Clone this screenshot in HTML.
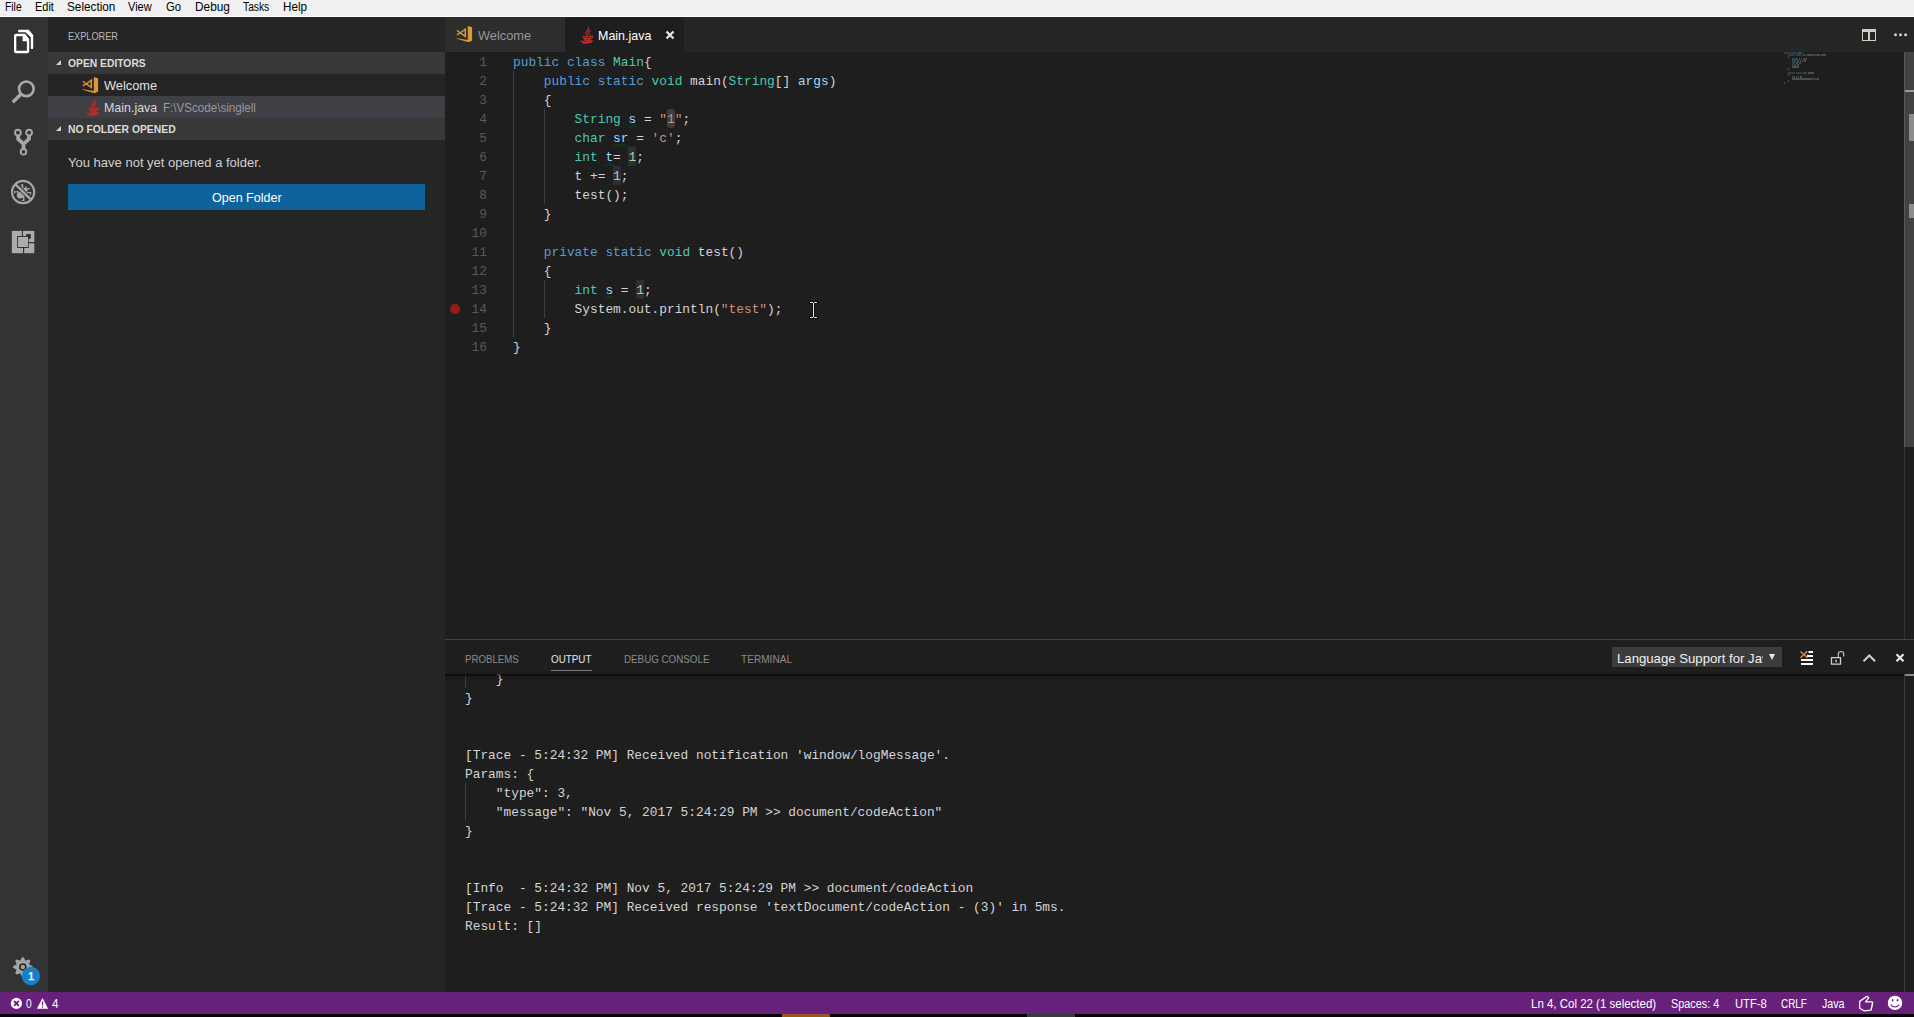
<!DOCTYPE html>
<html lang="en">
<head>
<meta charset="utf-8">
<title>Main.java - Visual Studio Code</title>
<style>
*{box-sizing:border-box;margin:0;padding:0}
html,body{width:1914px;height:1017px;overflow:hidden;background:#000}
body{position:relative;font-family:"Liberation Sans",sans-serif;font-size:13px;color:#ccc;-webkit-font-smoothing:antialiased}
.abs{position:absolute}
.t{position:absolute;white-space:pre;line-height:1;transform-origin:0 0}
/* menu */
#menu{left:0;top:0;width:1914px;height:17px;background:#f0f0f0;border-bottom:1px solid #fff}
#menu .t{top:1px;font-size:12px;color:#000;line-height:13px}
/* activity bar */
#act{left:0;top:17px;width:48px;height:975px;background:#333333}
/* sidebar */
#side{left:48px;top:17px;width:397px;height:975px;background:#252526}
.hdr{left:0;width:397px;height:22px;background:#383838}
.hdr .t{left:20px;top:5px;font-size:11px;font-weight:bold;color:#dcdcdc;line-height:12px}
.tri{position:absolute;left:7.600px;top:7.700px;width:0;height:0;border-left:5.700px solid transparent;border-bottom:5.700px solid #d0d0d0}
/* editor */
#tabs{left:445px;top:17px;width:1469px;height:35px;background:#252526}
#ed{left:445px;top:52px;width:1469px;height:587px;background:#1e1e1e}
.ln{position:absolute;left:0;margin-top:1px;width:42px;text-align:right;font-family:"Liberation Mono",monospace;font-size:12.83px;line-height:19px;height:19px;color:#5a5a5a;white-space:pre}
.cl{position:absolute;left:68px;margin-top:1px;font-family:"Liberation Mono",monospace;font-size:12.83px;line-height:19px;height:19px;color:#d4d4d4;white-space:pre}
.k{color:#569cd6}.ty{color:#4ec9b0}.v{color:#9cdcfe}.s{color:#ce9178}.n{color:#b5cea8}
.hl{position:absolute;height:19px;background:#2c3034}
.sel{position:absolute;height:19px;background:#3a3d41;border-radius:3px}
.g{position:absolute;width:1px;background:#404040}
/* panel */
#panel{left:445px;top:639px;width:1469px;height:353px;background:#1e1e1e}
#panel:before{content:"";position:absolute;left:0;top:0;width:1469px;height:1px;background:#414141}
.pt{position:absolute;transform-origin:0 0;top:14px;font-size:11px;line-height:12px;color:#8b8b8b;white-space:pre}
.ol{position:absolute;left:20px;margin-top:1px;font-family:"Liberation Mono",monospace;font-size:12.83px;line-height:19px;height:19px;color:#d4d4d4;white-space:pre}
/* status */
#status{left:0;top:992px;width:1914px;height:22px;background:#68217a}
#status .t{top:6px;font-size:12px;color:#fff;line-height:13px}
#strip{left:0;top:1014px;width:1914px;height:3px;background:#020208}
</style>
</head>
<body>
<svg width="0" height="0" style="position:absolute">
<defs>
<g id="vsc">
<path d="M11.800 .9L16.100 2.200V15.600L13.300 16.900L11.800 16.400z" fill="#dc9634"/>
<path d="M9.300 4.200V11.400L4.200 7.900z" fill="none" stroke="#dc9634" stroke-width="1.500" stroke-linejoin="miter"/>
<path d="M.9 5.300L4.600 8.200M.9 9.900L4.600 7.500" fill="none" stroke="#dc9634" stroke-width="1.400"/>
<path d="M.6 13.200L12 15.100L13.400 16.900L10.800 16.700L.6 13.700z" fill="#dc9634"/>
</g>
<g id="jv" fill="none" stroke="#b8302a" stroke-width="1.300" stroke-linecap="round">
<path d="M8.600 .6c1.200 2-3.400 3.400-2.600 5.800c.3 .9 1 1.400 1.300 2.200M10 3.600c-2.200 .9-1.700 2.300-.9 3.300" />
<path d="M3 9.300c2.500 .8 5.800 .6 7.800-.3M10.800 9.200c2-.6 2.400 1.600 0 2.300M3.800 11.200c1.500 .8 5 .7 6.400 0M4.200 12.800c1.400 .6 4 .6 5.600 0"/>
<path d="M1 14c2.500 1.500 8 1.500 11.200-.4M2.500 15.600c3 .7 6.500 .5 9-.6"/>
</g>
</defs>
</svg>
<div id="menu" class="abs">
<span class="t" style="left:4.5px;transform:scaleX(0.860)">File</span>
<span class="t" style="left:34.6px;transform:scaleX(0.914)">Edit</span>
<span class="t" style="left:67.4px;transform:scaleX(0.980)">Selection</span>
<span class="t" style="left:128.4px;transform:scaleX(0.919)">View</span>
<span class="t" style="left:166.0px;transform:scaleX(0.938)">Go</span>
<span class="t" style="left:194.5px;transform:scaleX(0.986)">Debug</span>
<span class="t" style="left:242.5px;transform:scaleX(0.855)">Tasks</span>
<span class="t" style="left:282.6px;transform:scaleX(0.972)">Help</span>
</div>

<div id="act" class="abs">
<svg class="abs" style="left:0;top:0" width="48" height="975" viewBox="0 17 48 975">
<!-- explorer -->
<path fill="#fff" fill-rule="evenodd" d="M16 33.700H25.100L29.200 38.900V51.200a2 2 0 0 1-2 2H16a2 2 0 0 1-2-2V35.700a2 2 0 0 1 2-2zM16.300 36.200H22.600V41.300H26.900V50.700H16.300z"/>
<path fill="#fff" d="M19.200 29.800H28.700L33.200 35.100V47.900a1.200 1.200 0 0 1-2.400 0V37.200L25.500 32.200H19.200a1.200 1.200 0 0 1 0-2.400z"/>
<!-- search -->
<g fill="none" stroke="#a5a8a6" stroke-linecap="butt">
<circle cx="26.350" cy="88.800" r="7.300" stroke-width="2.650"/>
<path d="M21.100 94.100L12.700 102.200" stroke-width="3.500"/>
</g>
<!-- git -->
<g fill="none" stroke="#a5a8a6">
<path d="M18.100 135.500V138.900L23.500 144V149M29 135.500V138.900L23.500 144" stroke-width="3.700" stroke-linejoin="miter"/>
<circle cx="17.900" cy="132.600" r="2.900" stroke-width="1.900" fill="#333"/>
<circle cx="29.100" cy="132.600" r="2.900" stroke-width="1.900" fill="#333"/>
<circle cx="23.500" cy="151.800" r="2.800" stroke-width="1.900" fill="#333"/>
</g>
<!-- debug -->
<g fill="#a5a8a6" stroke="none">
<circle cx="20.100" cy="195.200" r="3.300"/><circle cx="25.600" cy="189.800" r="2.300"/><path d="M18 193l5-4.500l4.500 4.500l-5 4.500z"/>
<rect x="21.600" y="184.300" width="1.700" height="4.500"/><rect x="20.600" y="184.300" width="1.500" height="1"/>
<rect x="14.100" y="191.200" width="4.500" height="1.200"/><rect x="14.100" y="191.200" width="1.100" height="2.200"/>
<rect x="26.800" y="188.100" width="3.400" height="1.100"/>
<rect x="27" y="192" width="4.100" height="1.200"/><rect x="30" y="192" width="1.100" height="2.800"/>
<rect x="23" y="196" width="1.500" height="5"/><rect x="21.800" y="200" width="1.500" height="1"/>
<path d="M25.500 186.200l1.200.5l-1 2.500l-1.200-.5z"/>
</g>
<path d="M15.400 184.300L30.800 199.500" stroke="#333" stroke-width="4.200" fill="none"/>
<g fill="none" stroke="#a5a8a6">
<circle cx="23.100" cy="192.050" r="11.150" stroke-width="2.100"/>
<path d="M15.200 184.100L31 199.700" stroke-width="2.400"/>
</g>
<!-- extensions -->
<g fill="#aaadab">
<rect x="11.840" y="230.900" width="10.060" height="22.300"/>
<rect x="21.800" y="247.400" width="1.200" height="5.800"/>
<rect x="23" y="230.900" width="11.300" height="11.150"/>
<rect x="24.200" y="243.300" width="10.100" height="9.900"/>
</g>
<rect x="26.200" y="234.100" width="4.600" height="4.600" fill="#2a2a2a"/>
<rect x="17.150" y="236" width="11.650" height="11.900" fill="#2a2a2a"/>
<rect x="18" y="236.900" width="10.100" height="10.100" fill="#aaadab"/>
<!-- gear -->
<g transform="translate(22.800 967)">
<g fill="#a3a5a3">
<circle r="7"/>
<path id="th" d="M-2.500 -6.300L-1.100 -9.500Q0 -10.100 1.100 -9.500L2.500 -6.300z"/>
<use href="#th" transform="rotate(45)"/><use href="#th" transform="rotate(90)"/><use href="#th" transform="rotate(135)"/><use href="#th" transform="rotate(180)"/><use href="#th" transform="rotate(225)"/><use href="#th" transform="rotate(270)"/><use href="#th" transform="rotate(315)"/>
</g>
<circle r="3" fill="#a3a5a3" stroke="#262626" stroke-width="1.600"/>
</g>
<circle cx="30.950" cy="976" r="9.200" fill="#167fc9"/>
<text x="31" y="980.100" text-anchor="middle" style="font-family:'Liberation Sans',sans-serif;font-size:11.200px;text-rendering:geometricPrecision" fill="#fff" stroke="#fff" stroke-width=".35">1</text>
</svg>
</div>

<div id="side" class="abs">
<span class="t" style="left:20.2px;top:14px;font-size:11px;color:#bbb;transform:scaleX(0.832)">EXPLORER</span>
<div class="abs hdr" style="top:35px"><i class="tri"></i><span class="t" style="left:20.0px;transform:scaleX(0.937)">OPEN EDITORS</span></div>
<div class="abs" style="left:0;top:57px;width:397px;height:22px"><svg class="abs" style="left:34px;top:2px" width="17" height="18"><use href="#vsc"/></svg><span class="t" style="left:55.7px;top:5px;font-size:13px;color:#e0e0e0;transform:scaleX(0.983)">Welcome</span></div>
<div class="abs" style="left:0;top:79px;width:397px;height:22px;background:#3f3f46"><svg class="abs" style="left:38px;top:3px" width="14" height="17"><use href="#jv" style="stroke:#c4443c"/></svg><span class="t" style="left:55.7px;top:5px;font-size:13px;color:#d8d8d8;transform:scaleX(0.957)">Main.java</span><span class="t" style="left:115.4px;top:6px;font-size:12px;color:#9a9a9a;transform:scaleX(0.967)">F:\VScode\singlell</span></div>
<div class="abs hdr" style="top:101px"><i class="tri"></i><span class="t" style="left:20.0px;transform:scaleX(0.942)">NO FOLDER OPENED</span></div>
<span class="t" style="left:20.0px;top:139px;font-size:13px;color:#d0d0d0;transform:scaleX(1.001)">You have not yet opened a folder.</span>
<div class="abs" style="left:20px;top:167px;width:357px;height:26px;background:#0e639c"><span class="t" style="left:143.6px;top:7px;font-size:13px;color:#fff;transform:scaleX(0.963)">Open Folder</span></div>
</div>

<div id="tabs" class="abs">
<div class="abs" style="left:0;top:0;width:120px;height:35px;background:#2d2d2d"><svg class="abs" style="left:11px;top:8px" width="17" height="18"><use href="#vsc"/></svg><span class="t" style="left:33.3px;top:12px;font-size:13px;color:#969696;transform:scaleX(0.983)">Welcome</span></div>
<div class="abs" style="left:120px;top:0;width:119px;height:35px;background:#1e1e1e"><svg class="abs" style="left:15px;top:10px" width="14" height="17"><use href="#jv"/></svg><span class="t" style="left:33.4px;top:12px;font-size:13px;color:#fff;transform:scaleX(0.959)">Main.java</span>
<svg class="abs" style="left:100px;top:13px" width="10" height="10"><path d="M1.500 1.500l7 7M8.500 1.500l-7 7" stroke="#e8e8e8" stroke-width="2.200" fill="none"/></svg></div>
<svg class="abs" style="left:1416px;top:11px" width="16" height="14" shape-rendering="crispEdges"><g fill="#c6d3c2"><rect x="1" y="1" width="14" height="3"/><rect x="1" y="1" width="1" height="12"/><rect x="14" y="1" width="1" height="12"/><rect x="1" y="12" width="14" height="1"/><rect x="7" y="1" width="2" height="12"/></g></svg>
<svg class="abs" style="left:1448px;top:15px" width="16" height="6"><circle cx="2.500" cy="2.700" r="1.500" fill="#d0d0d0"/><circle cx="7.500" cy="2.700" r="1.500" fill="#d0d0d0"/><circle cx="12.600" cy="2.700" r="1.500" fill="#d0d0d0"/></svg>
</div>

<div id="ed" class="abs">
<!--EDS-->
<i class="sel" style="left:222px;top:57px;width:8px"></i>
<i class="hl" style="left:183px;top:95px;width:8px"></i>
<i class="hl" style="left:168px;top:114px;width:8px"></i>
<i class="hl" style="left:191px;top:228px;width:8px"></i>
<div class="ln" style="top:0px">1</div><div class="cl" style="top:0px"><span class="k">public</span> <span class="k">class</span> <span class="ty">Main</span>{</div>
<div class="ln" style="top:19px">2</div><div class="cl" style="top:19px">    <span class="k">public</span> <span class="k">static</span> <span class="ty">void</span> main(<span class="ty">String</span>[] <span class="v">args</span>)</div>
<div class="ln" style="top:38px">3</div><div class="cl" style="top:38px">    {</div>
<div class="ln" style="top:57px">4</div><div class="cl" style="top:57px">        <span class="ty">String</span> <span class="v">s</span> = <span class="s">"1"</span>;</div>
<div class="ln" style="top:76px">5</div><div class="cl" style="top:76px">        <span class="ty">char</span> <span class="v">sr</span> = <span class="s">'c'</span>;</div>
<div class="ln" style="top:95px">6</div><div class="cl" style="top:95px">        <span class="ty">int</span> <span class="v">t</span>= <span class="n">1</span>;</div>
<div class="ln" style="top:114px">7</div><div class="cl" style="top:114px">        t += <span class="n">1</span>;</div>
<div class="ln" style="top:133px">8</div><div class="cl" style="top:133px">        test();</div>
<div class="ln" style="top:152px">9</div><div class="cl" style="top:152px">    }</div>
<div class="ln" style="top:171px">10</div><div class="cl" style="top:171px"></div>
<div class="ln" style="top:190px">11</div><div class="cl" style="top:190px">    <span class="k">private</span> <span class="k">static</span> <span class="ty">void</span> test()</div>
<div class="ln" style="top:209px">12</div><div class="cl" style="top:209px">    {</div>
<div class="ln" style="top:228px">13</div><div class="cl" style="top:228px">        <span class="ty">int</span> <span class="v">s</span> = <span class="n">1</span>;</div>
<div class="ln" style="top:247px">14</div><div class="cl" style="top:247px">        System.out.println(<span class="s">"test"</span>);</div>
<div class="ln" style="top:266px">15</div><div class="cl" style="top:266px">    }</div>
<div class="ln" style="top:285px">16</div><div class="cl" style="top:285px">}</div>
<svg class="abs" style="left:183.5px;top:72px;overflow:visible" width="7.7" height="5"><path d="M0 3.5 L5 1.5 L8 3.5" fill="none" stroke="#0d4411" stroke-width="1.300" stroke-linejoin="round"/></svg>
<svg class="abs" style="left:168.1px;top:91px;overflow:visible" width="15.4" height="5"><path d="M0 3.5 L5 1.5 L8 3.5 L11 1.5 L14 3.5" fill="none" stroke="#0d4411" stroke-width="1.300" stroke-linejoin="round"/></svg>
<svg class="abs" style="left:160.4px;top:110px;overflow:visible" width="7.7" height="5"><path d="M0 3.5 L5 1.5 L8 3.5" fill="none" stroke="#0d4411" stroke-width="1.300" stroke-linejoin="round"/></svg>
<svg class="abs" style="left:160.4px;top:243px;overflow:visible" width="7.7" height="5"><path d="M0 3.5 L5 1.5 L8 3.5" fill="none" stroke="#0d4411" stroke-width="1.300" stroke-linejoin="round"/></svg>
<i class="g" style="left:68px;top:19px;height:266px"></i>
<i class="g" style="left:99px;top:57px;height:95px"></i>
<i class="g" style="left:99px;top:228px;height:38px"></i>
<i class="abs" style="left:5px;top:252px;width:10px;height:10px;border-radius:50%;background:#931e18"></i>
<svg class="abs" style="left:363px;top:248px" width="11" height="20" shape-rendering="crispEdges"><g fill="#0c0c0c"><rect x="1" y="1" width="9" height="3"/><rect x="4" y="2" width="3" height="16"/><rect x="1" y="16" width="9" height="3"/></g><g fill="#ebe7e1"><rect x="2" y="2" width="3" height="1"/><rect x="6" y="2" width="3" height="1"/><rect x="5" y="3" width="1" height="14"/><rect x="2" y="17" width="3" height="1"/><rect x="6" y="17" width="3" height="1"/></g></svg>
<svg class="abs" style="left:1339px;top:0" width="60" height="34" opacity=".26"><rect x="0" y="0" width="6" height="2" fill="#569cd6"/><rect x="7" y="0" width="5" height="2" fill="#569cd6"/><rect x="13" y="0" width="4" height="2" fill="#4ec9b0"/><rect x="17" y="0" width="1" height="2" fill="#d4d4d4"/><rect x="4" y="2" width="6" height="2" fill="#569cd6"/><rect x="11" y="2" width="6" height="2" fill="#569cd6"/><rect x="18" y="2" width="4" height="2" fill="#4ec9b0"/><rect x="23" y="2" width="5" height="2" fill="#d4d4d4"/><rect x="28" y="2" width="6" height="2" fill="#4ec9b0"/><rect x="34" y="2" width="2" height="2" fill="#d4d4d4"/><rect x="37" y="2" width="4" height="2" fill="#9cdcfe"/><rect x="41" y="2" width="1" height="2" fill="#d4d4d4"/><rect x="4" y="4" width="1" height="2" fill="#d4d4d4"/><rect x="8" y="6" width="6" height="2" fill="#4ec9b0"/><rect x="15" y="6" width="1" height="2" fill="#9cdcfe"/><rect x="17" y="6" width="1" height="2" fill="#d4d4d4"/><rect x="19" y="6" width="3" height="2" fill="#ce9178"/><rect x="22" y="6" width="1" height="2" fill="#d4d4d4"/><rect x="8" y="8" width="4" height="2" fill="#4ec9b0"/><rect x="13" y="8" width="2" height="2" fill="#9cdcfe"/><rect x="16" y="8" width="1" height="2" fill="#d4d4d4"/><rect x="18" y="8" width="3" height="2" fill="#ce9178"/><rect x="21" y="8" width="1" height="2" fill="#d4d4d4"/><rect x="8" y="10" width="3" height="2" fill="#4ec9b0"/><rect x="12" y="10" width="1" height="2" fill="#9cdcfe"/><rect x="13" y="10" width="1" height="2" fill="#d4d4d4"/><rect x="15" y="10" width="1" height="2" fill="#b5cea8"/><rect x="16" y="10" width="1" height="2" fill="#d4d4d4"/><rect x="8" y="12" width="1" height="2" fill="#d4d4d4"/><rect x="10" y="12" width="2" height="2" fill="#d4d4d4"/><rect x="13" y="12" width="1" height="2" fill="#b5cea8"/><rect x="14" y="12" width="1" height="2" fill="#d4d4d4"/><rect x="8" y="14" width="7" height="2" fill="#d4d4d4"/><rect x="4" y="16" width="1" height="2" fill="#d4d4d4"/><rect x="4" y="20" width="7" height="2" fill="#569cd6"/><rect x="12" y="20" width="6" height="2" fill="#569cd6"/><rect x="19" y="20" width="4" height="2" fill="#4ec9b0"/><rect x="24" y="20" width="6" height="2" fill="#d4d4d4"/><rect x="4" y="22" width="1" height="2" fill="#d4d4d4"/><rect x="8" y="24" width="3" height="2" fill="#4ec9b0"/><rect x="12" y="24" width="1" height="2" fill="#9cdcfe"/><rect x="14" y="24" width="1" height="2" fill="#d4d4d4"/><rect x="16" y="24" width="1" height="2" fill="#b5cea8"/><rect x="17" y="24" width="1" height="2" fill="#d4d4d4"/><rect x="8" y="26" width="19" height="2" fill="#d4d4d4"/><rect x="27" y="26" width="6" height="2" fill="#ce9178"/><rect x="33" y="26" width="2" height="2" fill="#d4d4d4"/><rect x="4" y="28" width="1" height="2" fill="#d4d4d4"/><rect x="0" y="30" width="1" height="2" fill="#d4d4d4"/></svg>
<i class="abs" style="left:1459px;top:0;width:1px;height:395px;background:#585858"></i>
<i class="abs" style="left:1459px;top:395px;width:1px;height:192px;background:#343434"></i>
<i class="abs" style="left:1460px;top:0;width:9px;height:395px;background:#424242"></i>
<i class="abs" style="left:1460px;top:38px;width:9px;height:2px;background:#9c9c9c"></i>
<i class="abs" style="left:1464px;top:62px;width:5px;height:27px;background:#8b8e8b"></i>
<i class="abs" style="left:1464px;top:152px;width:5px;height:14px;background:#8b8e8b"></i>
<!--EDE-->
</div>

<div id="panel" class="abs">
<span class="pt" style="left:20.2px;transform:scaleX(0.879)">PROBLEMS</span>
<span class="pt" style="left:105.8px;color:#e7e7e7;transform:scaleX(0.893)">OUTPUT</span>
<i class="abs" style="left:106px;top:31px;width:41px;height:1px;background:#7a7a7a"></i>
<span class="pt" style="left:179.2px;transform:scaleX(0.890)">DEBUG CONSOLE</span>
<span class="pt" style="left:296.4px;transform:scaleX(0.918)">TERMINAL</span>
<div class="abs" style="left:1167px;top:8px;width:170px;height:20px;background:#3c3c3c;overflow:hidden"><span class="t" style="left:5px;top:2px;line-height:19px;font-size:13px;color:#f0f0f0;width:144.300px;overflow:hidden;transform:scaleX(1.013)">Language Support for Java</span><i class="abs" style="left:156.800px;top:7px;width:0;height:0;border-left:3.200px solid transparent;border-right:3.200px solid transparent;border-top:6px solid #e8e8e8"></i></div>
<svg class="abs" style="left:1354px;top:11px" width="16" height="16"><g fill="#fdfdf6"><rect x="9.500" y="1" width="4.500" height="2"/><rect x="8" y="5" width="6" height="2"/><rect x="2" y="9" width="12" height="2"/><rect x="2" y="13" width="12" height="2"/></g><path d="M1.500 1.400l7 6.300M8.300 1.200l-6.800 6.500" stroke="#d8904a" stroke-width="1.300" fill="none"/></svg>
<svg class="abs" style="left:1384px;top:11px" width="18" height="16"><path d="M2.500 7.700h9v6.400h-9z" fill="none" stroke="#c5d5c5" stroke-width="1.300"/><path d="M9.300 7.500v-3.300a2.700 2.700 0 0 1 5.400 0v2.300" fill="none" stroke="#b8c4c8" stroke-width="1.200"/><rect x="6.200" y="9.700" width="1.700" height="2.600" fill="#9ab"/></svg>
<svg class="abs" style="left:1416px;top:14px" width="16" height="10"><path d="M2.500 8.300l5.800-5.800l5.800 5.800" fill="none" stroke="#c5d5c5" stroke-width="2"/></svg>
<svg class="abs" style="left:1450px;top:14px" width="10" height="10"><path d="M1.500 1.200l7 7M8.500 1.200l-7 7" stroke="#e8e8e8" stroke-width="2.200" fill="none"/></svg>
<div class="abs" style="left:0;top:35px;width:1469px;height:318px;overflow:hidden">
<div class="abs" style="left:0;top:-5px;width:1469px;height:330px">
<i class="g" style="left:20px;top:0;height:19px"></i><i class="g" style="left:20px;top:114px;height:38px"></i>
<div class="ol" style="top:0px">    }</div>
<div class="ol" style="top:19px">}</div>
<div class="ol" style="top:76px">[Trace - 5:24:32 PM] Received notification 'window/logMessage'.</div>
<div class="ol" style="top:95px">Params: {</div>
<div class="ol" style="top:114px">    "type": 3,</div>
<div class="ol" style="top:133px">    "message": "Nov 5, 2017 5:24:29 PM &gt;&gt; document/codeAction"</div>
<div class="ol" style="top:152px">}</div>
<div class="ol" style="top:209px">[Info  - 5:24:32 PM] Nov 5, 2017 5:24:29 PM &gt;&gt; document/codeAction</div>
<div class="ol" style="top:228px">[Trace - 5:24:32 PM] Received response 'textDocument/codeAction - (3)' in 5ms.</div>
<div class="ol" style="top:247px">Result: []</div>
</div>
<i class="abs" style="left:0;top:0;width:1459px;height:6px;background:linear-gradient(#000 0,rgba(0,0,0,.35) 35%,rgba(0,0,0,0) 100%);opacity:.75"></i>
<i class="abs" style="left:1459px;top:0;width:1px;height:318px;background:#3c3c3c"></i>
<i class="abs" style="left:1460px;top:0;width:9px;height:2px;background:#8a8a8a"></i>
</div>
</div>

<div id="status" class="abs">
<svg class="abs" style="left:10px;top:5px" width="13" height="13"><circle cx="6.400" cy="6.400" r="5.600" fill="#fff"/><path d="M4 4l4.800 4.800M8.800 4l-4.800 4.800" stroke="#68217a" stroke-width="1.800" fill="none"/></svg>
<span class="t" style="left:26.2px;transform:scaleX(0.857)">0</span>
<svg class="abs" style="left:36px;top:5px" width="13" height="13"><path d="M6.500 1l5.600 10.800h-11.200z" fill="#fff"/><path d="M6.500 4.500v4" stroke="#68217a" stroke-width="1.300"/><rect x="5.850" y="9.300" width="1.300" height="1.300" fill="#68217a"/></svg>
<span class="t" style="left:52.0px;transform:scaleX(0.971)">4</span>
<span class="t" style="left:1530.6px;transform:scaleX(0.957)">Ln 4, Col 22 (1 selected)</span>
<span class="t" style="left:1671.0px;transform:scaleX(0.906)">Spaces: 4</span>
<span class="t" style="left:1735.0px;transform:scaleX(0.935)">UTF-8</span>
<span class="t" style="left:1781.3px;transform:scaleX(0.825)">CRLF</span>
<span class="t" style="left:1822.2px;transform:scaleX(0.888)">Java</span>
<svg class="abs" style="left:1858px;top:3px" width="17" height="18"><path d="M9 1.300L10.900 2.700L7.600 6.900H14.300L14.700 8L13.100 15.200L6 15.800L1.700 13.200V6.400z" fill="none" stroke="#fff" stroke-width="1.300" stroke-linejoin="round"/><path d="M13.300 9.300h1M13 11.400h1M12.500 13.400h1" stroke="#fff" stroke-width=".8"/></svg>
<svg class="abs" style="left:1887px;top:3px" width="16" height="16"><circle cx="8" cy="7.900" r="7.200" fill="#fff"/><ellipse cx="5.600" cy="5.200" rx=".8" ry="1.300" fill="#68217a"/><ellipse cx="10.500" cy="5.200" rx=".8" ry="1.300" fill="#68217a"/><path d="M3.700 9.600c1.700 3.200 6.900 3.200 8.600 0" fill="none" stroke="#68217a" stroke-width="1.100"/></svg>
</div>
<div id="strip" class="abs"><i class="abs" style="left:782px;top:0;width:48px;height:3px;background:#9b5523"></i><i class="abs" style="left:1027px;top:0;width:48px;height:3px;background:#3a3b3d"></i></div>
</body>
</html>
